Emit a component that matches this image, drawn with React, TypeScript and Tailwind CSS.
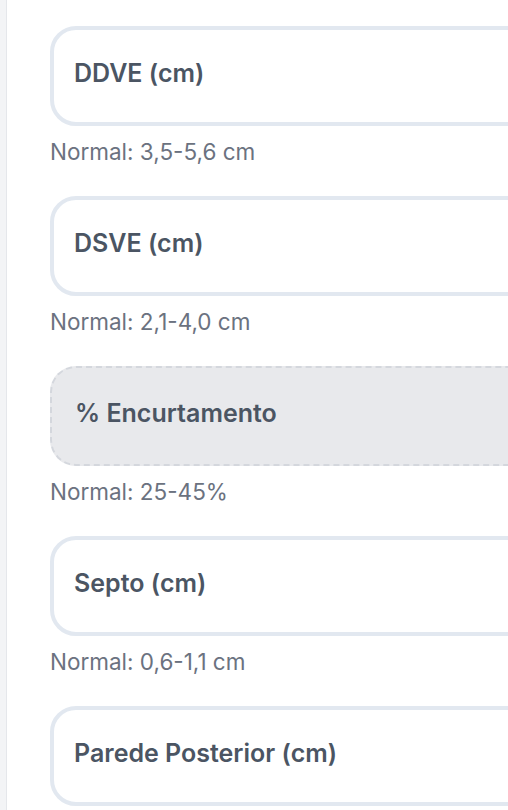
import React from "react";

type Field = {
  label: string;
  hint?: string;
  computed?: boolean;
};

const fields: Field[] = [
  { label: "DDVE (cm)", hint: "Normal: 3,5-5,6 cm" },
  { label: "DSVE (cm)", hint: "Normal: 2,1-4,0 cm" },
  { label: "% Encurtamento", hint: "Normal: 25-45%", computed: true },
  { label: "Septo (cm)", hint: "Normal: 0,6-1,1 cm" },
  { label: "Parede Posterior (cm)" },
];

const MeasureField = ({ label, hint, computed }: Field) => {
  return (
    <div className="flex flex-col">
      <div
        className={
          computed
            ? "h-[100px] w-[560px] rounded-[26px] border-2 border-dashed border-[#d4d7dd] bg-[#e8e9ec] flex items-center px-[23px] pb-[5px]"
            : "h-[100px] w-[560px] rounded-[26px] border-[4px] border-[#e2e8f0] bg-white flex items-center px-[20px] pb-[5px]"
        }
      >
        <span className="text-[25px] font-semibold text-[#4b5563]">{label}</span>
      </div>
      {hint && (
        <p className="mt-[14px] text-[22.5px] leading-[24px] text-[#6b7280]">{hint}</p>
      )}
    </div>
  );
};

export default function App() {
  return (
    <div
      className="flex h-[810px] w-[508px] overflow-hidden bg-white"
      style={{ fontFamily: "Inter, 'Noto Sans', sans-serif" }}
    >
      <div className="w-[7px] shrink-0 bg-[#f3f4f6] border-r border-[#e5e7eb]" />
      <div className="flex flex-col gap-[32px] pl-[43px] pt-[26px]">
        {fields.map((f) => (
          <MeasureField key={f.label} {...f} />
        ))}
      </div>
    </div>
  );
}
